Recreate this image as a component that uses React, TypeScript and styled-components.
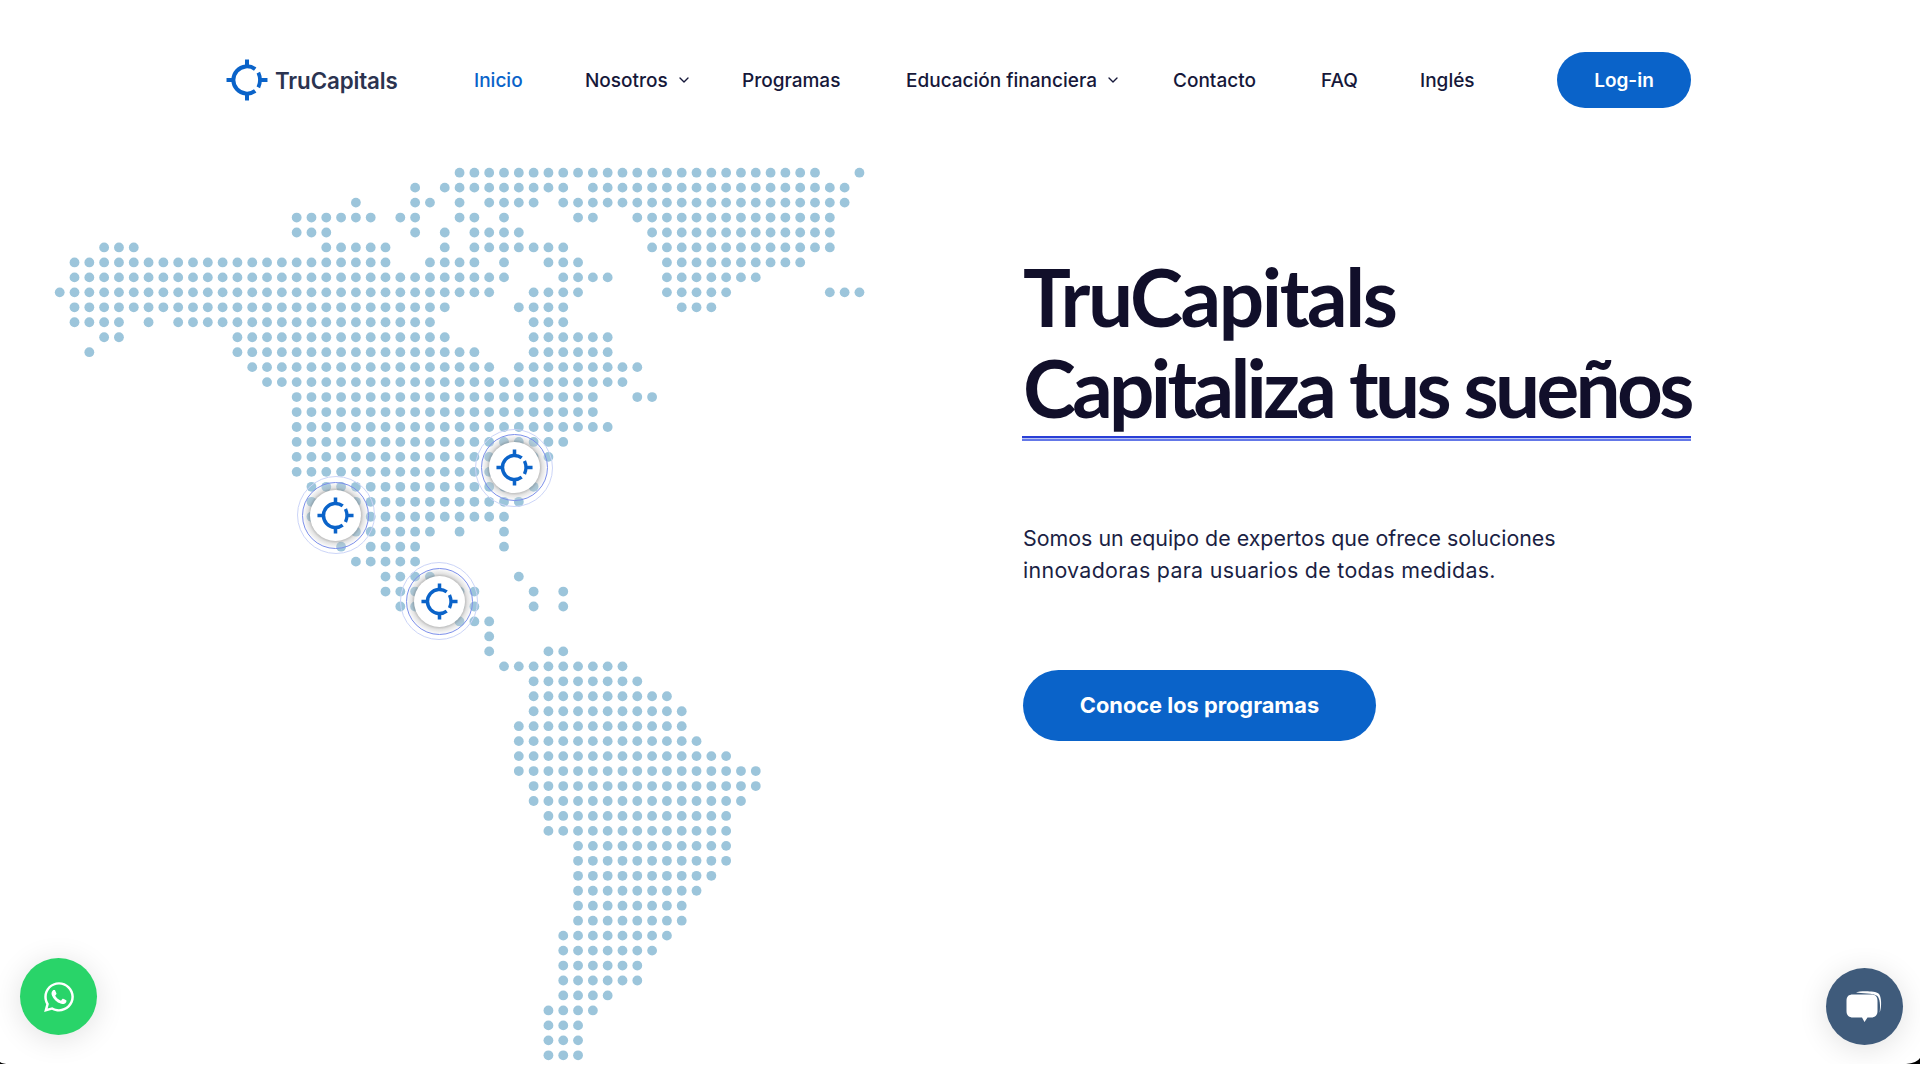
import React from 'react'
import styled, {createGlobalStyle} from 'styled-components'
import {FaWhatsapp} from 'react-icons/fa'
import {FiChevronDown} from 'react-icons/fi'

const BLUE = '#0a63c9'
const INK = '#14163a'

const GlobalStyle = createGlobalStyle`
    html, body {
        margin: 0;
        background: #fff;
    }
    body {
        font-family: "Inter", "Liberation Sans", sans-serif;
        color: ${INK};
    }
`

const Page = styled.div`
    position: relative;
    width: 1920px;
    height: 1064px;
    overflow: hidden;
    background: #fff;
`

const Header = styled.header`
    display: flex;
    align-items: center;
    height: 56px;
    padding: 52px 229px 0 226px;
`

const Brand = styled.a`
    display: flex;
    align-items: center;
    gap: 7px;
    width: 248px;
    color: #2b3350;
    font-size: 22.3px;
    font-weight: 600;
    letter-spacing: -0.1px;
`

const Menu = styled.nav`
    display: flex;
    align-items: center;
    flex: 1;
`

const MenuItem = styled.a<{$active?: boolean; $width: number}>`
    display: flex;
    align-items: center;
    gap: 8px;
    width: ${p => p.$width}px;
    flex: none;
    font-size: 19px;
    font-weight: 500;
    white-space: nowrap;
    color: ${p => (p.$active ? BLUE : '#16183a')};
    svg {
        width: 16px;
        height: 16px;
    }
`

const LoginButton = styled.a`
    display: flex;
    align-items: center;
    justify-content: center;
    width: 134px;
    height: 56px;
    margin-left: auto;
    border-radius: 28px;
    background: ${BLUE};
    color: #fff;
    font-size: 19px;
    font-weight: 600;
`

const Hero = styled.main`
    display: grid;
    grid-template-columns: 1023px 668px;
    height: 956px;
`

const MapCol = styled.div`
    position: relative;
`

const DotMap = styled.svg`
    display: block;
    width: 1000px;
    height: 1000px;
    circle {
        fill: #9cc5db;
    }
`

const Pin = styled.div<{$x: number; $y: number}>`
    position: absolute;
    left: ${p => p.$x - 39}px;
    top: ${p => p.$y - 39}px;
    display: flex;
    align-items: center;
    justify-content: center;
    box-sizing: border-box;
    width: 78px;
    height: 78px;
    border-radius: 50%;
    border: 1.5px solid #ccd5f8;
    &::before {
        content: '';
        position: absolute;
        inset: 4.5px;
        border-radius: 50%;
        border: 1.5px solid #7c8fea;
        background: radial-gradient(circle closest-side, rgba(120, 120, 120, 0.55) 0 76%, rgba(185, 185, 185, 0.4) 86%, rgba(240, 240, 240, 0.2) 100%);
    }
    &::after {
        content: '';
        position: absolute;
        inset: 12.5px;
        border-radius: 50%;
        background: #fff;
    }
    svg {
        position: relative;
        z-index: 1;
    }
`

const Copy = styled.section`
    display: flex;
    flex-direction: column;
    padding-top: 143px;
`

const Title = styled.h1`
    margin: 0;
    color: #110f2a;
    font-family: "Lato", sans-serif;
    font-size: 80px;
    line-height: 91px;
    font-weight: 700;
    white-space: nowrap;
`

const TitleLine = styled.span<{$spacing: number}>`
    display: block;
    letter-spacing: ${p => p.$spacing}px;
`

const TitleRule = styled.div`
    height: 5px;
    margin: 3px 0 0 -1px;
    background: linear-gradient(#2a3fd6 0 2px, #b9c3f3 2px 3px, #6478e8 3px 5px);
`

const Lead = styled.p`
    margin: 81px 0 0;
    color: #1b1f44;
    font-size: 21.4px;
    line-height: 32.4px;
    font-weight: 400;
    white-space: nowrap;
`

const LeadLine = styled.span<{$spacing: number}>`
    display: block;
    letter-spacing: ${p => p.$spacing}px;
`

const CtaButton = styled.a`
    display: flex;
    align-items: center;
    justify-content: center;
    width: 353px;
    height: 71px;
    margin-top: 83px;
    border-radius: 36px;
    background: ${BLUE};
    color: #fff;
    font-size: 21.8px;
    font-weight: 700;
`

const Fab = styled.a<{$side: 'left' | 'right'; $color: string; $bottom: number}>`
    position: absolute;
    ${p => p.$side}: ${p => (p.$side === 'left' ? 20 : 17)}px;
    bottom: ${p => p.$bottom}px;
    display: flex;
    align-items: center;
    justify-content: center;
    width: 77px;
    height: 77px;
    border-radius: 50%;
    background: ${p => p.$color};
    color: #fff;
    box-shadow: 0 4px 30px rgba(0, 0, 0, 0.12);
`

const CornerMark = styled.svg<{$side: 'left' | 'right'}>`
    position: absolute;
    bottom: 0;
    ${p => p.$side}: 0;
`

// rows of the dot map: [row, from col, to col, from col, to col...]
const ROWS: number[][] = [
    [0, 27, 51, 54, 54],
    [1, 24, 24, 26, 34, 36, 53],
    [2, 20, 20, 24, 25, 27, 27, 29, 32, 34, 53],
    [3, 16, 21, 23, 24, 27, 28, 30, 30, 35, 36, 39, 52],
    [4, 16, 18, 24, 24, 26, 26, 28, 31, 40, 52],
    [5, 3, 5, 18, 22, 26, 26, 28, 34, 40, 52],
    [6, 1, 22, 25, 28, 30, 30, 33, 35, 41, 50],
    [7, 1, 30, 34, 37, 41, 47],
    [8, 0, 29, 32, 35, 41, 45, 52, 54],
    [9, 1, 26, 31, 34, 42, 44],
    [10, 1, 4, 6, 6, 8, 25, 32, 34],
    [11, 3, 4, 12, 26, 32, 37],
    [12, 2, 2, 12, 28, 32, 37],
    [13, 13, 29, 31, 39],
    [14, 14, 38],
    [15, 16, 36, 39, 40],
    [16, 16, 36],
    [17, 16, 37],
    [18, 16, 34],
    [19, 16, 33],
    [20, 16, 32],
    [21, 17, 32],
    [22, 17, 31],
    [23, 17, 30],
    [24, 18, 25, 27, 27, 30, 30],
    [25, 19, 19, 21, 24, 30, 30],
    [26, 20, 24],
    [27, 22, 25, 31, 31],
    [28, 22, 28, 32, 32, 34, 34],
    [29, 23, 28, 32, 32, 34, 34],
    [30, 26, 29],
    [31, 29, 29],
    [32, 29, 29, 33, 34],
    [33, 30, 38],
    [34, 32, 39],
    [35, 32, 41],
    [36, 32, 42],
    [37, 31, 42],
    [38, 31, 43],
    [39, 31, 45],
    [40, 31, 47],
    [41, 32, 47],
    [42, 32, 46],
    [43, 33, 45],
    [44, 33, 45],
    [45, 35, 45],
    [46, 35, 45],
    [47, 35, 44],
    [48, 35, 43],
    [49, 35, 42],
    [50, 35, 42],
    [51, 34, 41],
    [52, 34, 40],
    [53, 34, 39],
    [54, 34, 39],
    [55, 34, 37],
    [56, 33, 36],
    [57, 33, 35],
    [58, 33, 35],
    [59, 33, 35],
    [60, 33, 35],
]

const dots: {x: number; y: number}[] = []
ROWS.forEach(([row, ...runs]) => {
    for (let i = 0; i < runs.length; i += 2) {
        for (let col = runs[i]; col <= runs[i + 1]; col++) {
            dots.push({x: 59.7 + col * 14.81, y: 64.67 + row * 14.96})
        }
    }
})

const Crosshair = ({size}: {size: number}) => (
    <svg width={size} height={size} viewBox="0 0 40 40" fill="none" stroke={BLUE}>
        <path d="M27.800 9.600A13 13 0 1 0 27.800 30.400" strokeWidth="3.8" />
        <path d="M30.800 13Q34 20 30.800 27" strokeWidth="3.600" />
        <path d="M20 0.500V7M20 33V39.500M0.500 20H7M33 20H39.500" strokeWidth="3.8" />
    </svg>
)

const ChatIcon = () => (
    <svg width="40" height="40" viewBox="0 0 40 40" fill="#fff">
        <path d="M11 5.500C14 3.800 30 3.600 33.500 6.500 36.600 9 37 20 34.600 25.800 35.600 19 35 11 32 8.800 28.800 6.400 16 6 11 5.500Z" />
        <path d="M8 7.500H26C30.400 7.500 32.500 9.500 32.500 14V24C32.500 28 30.500 30.500 26 30.500H22.500L19.500 35 17 30.500H8C3.500 30.500 1.500 28 1.500 24V14C1.500 9.500 3.500 7.500 8 7.500Z" />
    </svg>
)

const App = () => {
    return (
        <Page>
            <GlobalStyle />
            <Header>
                <Brand>
                    <Crosshair size={42} />
                    TruCapitals
                </Brand>
                <Menu>
                    <MenuItem $active $width={111}>Inicio</MenuItem>
                    <MenuItem $width={157}>Nosotros <FiChevronDown /></MenuItem>
                    <MenuItem $width={164}>Programas</MenuItem>
                    <MenuItem $width={267}>Educación financiera <FiChevronDown /></MenuItem>
                    <MenuItem $width={148}>Contacto</MenuItem>
                    <MenuItem $width={99}>FAQ</MenuItem>
                    <MenuItem $width={54}>Inglés</MenuItem>
                </Menu>
                <LoginButton>Log-in</LoginButton>
            </Header>
            <Hero>
                <MapCol>
                    <DotMap viewBox="0 0 1000 1000">
                        {dots.map((d, i) => <circle key={i} cx={d.x} cy={d.y} r="4.9" />)}
                    </DotMap>
                    <Pin $x={514} $y={359.700}><Crosshair size={37} /></Pin>
                    <Pin $x={335.700} $y={407.300}><Crosshair size={37} /></Pin>
                    <Pin $x={439} $y={493}><Crosshair size={37} /></Pin>
                </MapCol>
                <Copy>
                    <Title>
                        <TitleLine $spacing={-2.4}>TruCapitals</TitleLine>
                        <TitleLine $spacing={-3.7}>Capitaliza tus sueños</TitleLine>
                    </Title>
                    <TitleRule />
                    <Lead>
                        <LeadLine $spacing={0}>Somos un equipo de expertos que ofrece soluciones</LeadLine>
                        <LeadLine $spacing={0.31}>innovadoras para usuarios de todas medidas.</LeadLine>
                    </Lead>
                    <CtaButton>Conoce los programas</CtaButton>
                </Copy>
            </Hero>
            <Fab $side="left" $color="#29d469" $bottom={29}><FaWhatsapp size={34} /></Fab>
            <Fab $side="right" $color="#3f5b7b" $bottom={19}><ChatIcon /></Fab>
            <CornerMark $side="left" width="9" height="2" viewBox="0 0 9 2"><path d="M0 0Q3 2 9 2H0Z" fill="#000" /></CornerMark>
            <CornerMark $side="right" width="14" height="6" viewBox="0 0 14 6"><path d="M14 0Q11 5 0 6H14Z" fill="#000" /></CornerMark>
        </Page>
    )
}

export default App
